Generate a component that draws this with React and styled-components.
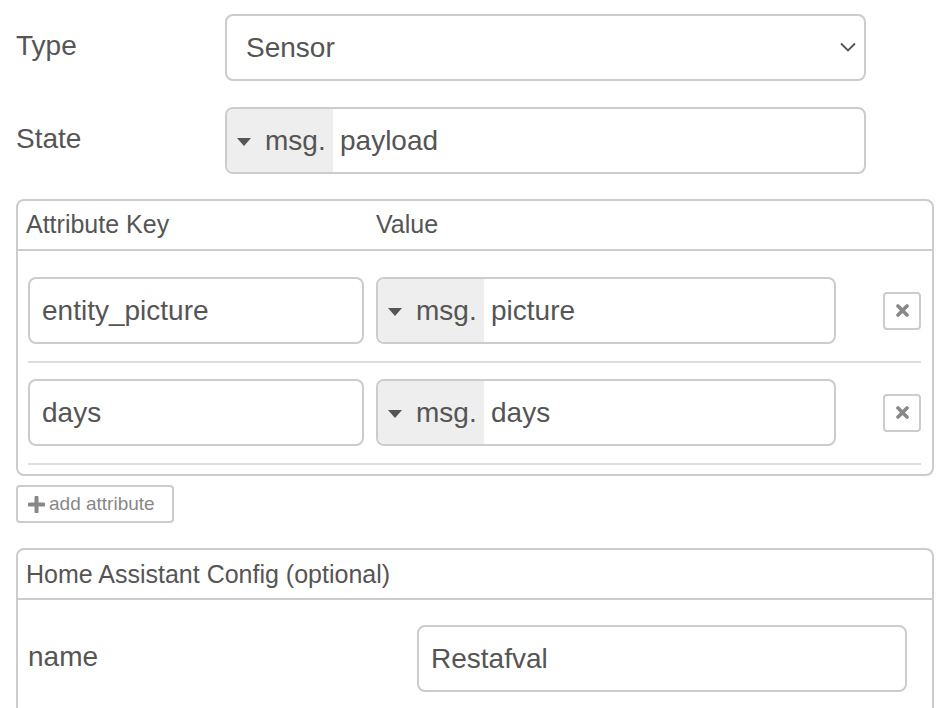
import styled, { createGlobalStyle } from "styled-components";

const GlobalStyle = createGlobalStyle`
  html, body {
    margin: 0;
    padding: 0;
    background: #fff;
  }
  body {
    font-family: "Liberation Sans", Arial, Helvetica, sans-serif;
    color: #555;
  }
  * {
    box-sizing: border-box;
  }
`;

const Page = styled.div`
  width: 948px;
  height: 708px;
  overflow: hidden;
  padding: 14px 14px 0 16px;
`;

const FormRow = styled.div`
  display: flex;
  align-items: center;
  margin-bottom: ${({ $gap }) => $gap ?? 26}px;
`;

const Label = styled.label`
  width: ${({ $width }) => $width ?? 209}px;
  flex-shrink: 0;
  font-size: 28px;
  color: #555;
  padding-bottom: 4px;
`;

const Field = styled.div`
  position: relative;
  display: flex;
  align-items: center;
  width: ${({ $width }) => $width}px;
  height: ${({ $height }) => $height ?? 67}px;
  border: 2px solid #ccc;
  border-radius: 8px;
  background: #fff;
  font-size: 28px;
  color: #555;
  overflow: hidden;
`;

const FieldText = styled.span`
  padding-left: ${({ $pad }) => $pad ?? 12}px;
  white-space: nowrap;
`;

const Chevron = styled.svg`
  position: absolute;
  right: 8px;
  top: 50%;
  margin-top: -6px;
`;

const TypeSelect = styled.div`
  display: flex;
  align-items: center;
  align-self: stretch;
  width: 106px;
  flex-shrink: 0;
  background: #eee;
  padding-left: 10px;
  gap: 14px;
`;

const Caret = styled.span`
  width: 0;
  height: 0;
  border-left: 7px solid transparent;
  border-right: 7px solid transparent;
  border-top: 8px solid #555;
  margin-top: 2px;
`;

const Panel = styled.div`
  width: 918px;
  border: 2px solid #ccc;
  border-radius: 8px;
`;

const PanelHeader = styled.div`
  height: 50px;
  display: flex;
  align-items: center;
  padding-left: 8px;
  border-bottom: 2px solid #ccc;
  font-size: 25px;
  color: #555;
`;

const HeaderCell = styled.span`
  width: ${({ $width }) => $width}px;
  padding-bottom: 2px;
`;

const ListBody = styled.div`
  padding: 10px 11px 9px 10px;
`;

const ListItem = styled.div`
  display: flex;
  align-items: center;
  padding: 16px 0 17px;
  border-bottom: 2px solid #ddd;
`;

const KeyCell = styled.div`
  margin-right: 12px;
`;

const RemoveButton = styled.button`
  margin-left: auto;
  width: 38px;
  height: 38px;
  padding: 0;
  display: flex;
  align-items: center;
  justify-content: center;
  border: 2px solid #ccc;
  border-radius: 4px;
  background: #fff;
`;

const AddButton = styled.button`
  margin: 9px 0 25px 0;
  height: 38px;
  width: 158px;
  display: flex;
  align-items: center;
  gap: 4px;
  padding: 0 0 0 10px;
  border: 2px solid #ccc;
  border-radius: 4px;
  background: #fff;
  font-family: inherit;
  font-size: 19px;
  color: #888;
`;

const ConfigBody = styled.div`
  padding: 25px 25px 0 10px;
`;

const TypedInput = ({ width, height, value }) => (
  <Field $width={width} $height={height}>
    <TypeSelect>
      <Caret />
      <span>msg.</span>
    </TypeSelect>
    <FieldText $pad={7}>{value}</FieldText>
  </Field>
);

const Times = () => (
  <svg width="13" height="13" viewBox="0 0 13 13">
    <path d="M2 2 L11 11 M11 2 L2 11" stroke="#888" strokeWidth="3.6" strokeLinecap="round" />
  </svg>
);

const Plus = () => (
  <svg width="17" height="17" viewBox="0 0 17 17">
    <path d="M8.5 1.5 V15.5 M1.5 8.5 H15.5" stroke="#888" strokeWidth="4" strokeLinecap="round" />
  </svg>
);

const attributes = [
  { key: "entity_picture", value: "picture" },
  { key: "days", value: "days" },
];

export default function App() {
  return (
    <>
      <GlobalStyle />
      <Page>
        <FormRow>
          <Label>Type</Label>
          <Field $width={641}>
            <FieldText $pad={19}>Sensor</FieldText>
            <Chevron width="16" height="10" viewBox="0 0 16 10">
              <path d="M1 1.5 L8 8.5 L15 1.5" fill="none" stroke="#555" strokeWidth="1.8" />
            </Chevron>
          </Field>
        </FormRow>

        <FormRow $gap={25}>
          <Label>State</Label>
          <TypedInput width={641} value="payload" />
        </FormRow>

        <Panel>
          <PanelHeader>
            <HeaderCell $width={350}>Attribute Key</HeaderCell>
            <HeaderCell>Value</HeaderCell>
          </PanelHeader>
          <ListBody>
            {attributes.map((a) => (
              <ListItem key={a.key}>
                <KeyCell>
                  <Field $width={336} $height={67}>
                    <FieldText $pad={12}>{a.key}</FieldText>
                  </Field>
                </KeyCell>
                <TypedInput width={460} height={67} value={a.value} />
                <RemoveButton>
                  <Times />
                </RemoveButton>
              </ListItem>
            ))}
          </ListBody>
        </Panel>

        <AddButton>
          <Plus />
          add attribute
        </AddButton>

        <Panel>
          <PanelHeader>Home Assistant Config (optional)</PanelHeader>
          <ConfigBody>
            <FormRow>
              <Label $width={389}>name</Label>
              <Field $width={492}>
                <FieldText $pad={12}>Restafval</FieldText>
              </Field>
            </FormRow>
          </ConfigBody>
        </Panel>
      </Page>
    </>
  );
}
